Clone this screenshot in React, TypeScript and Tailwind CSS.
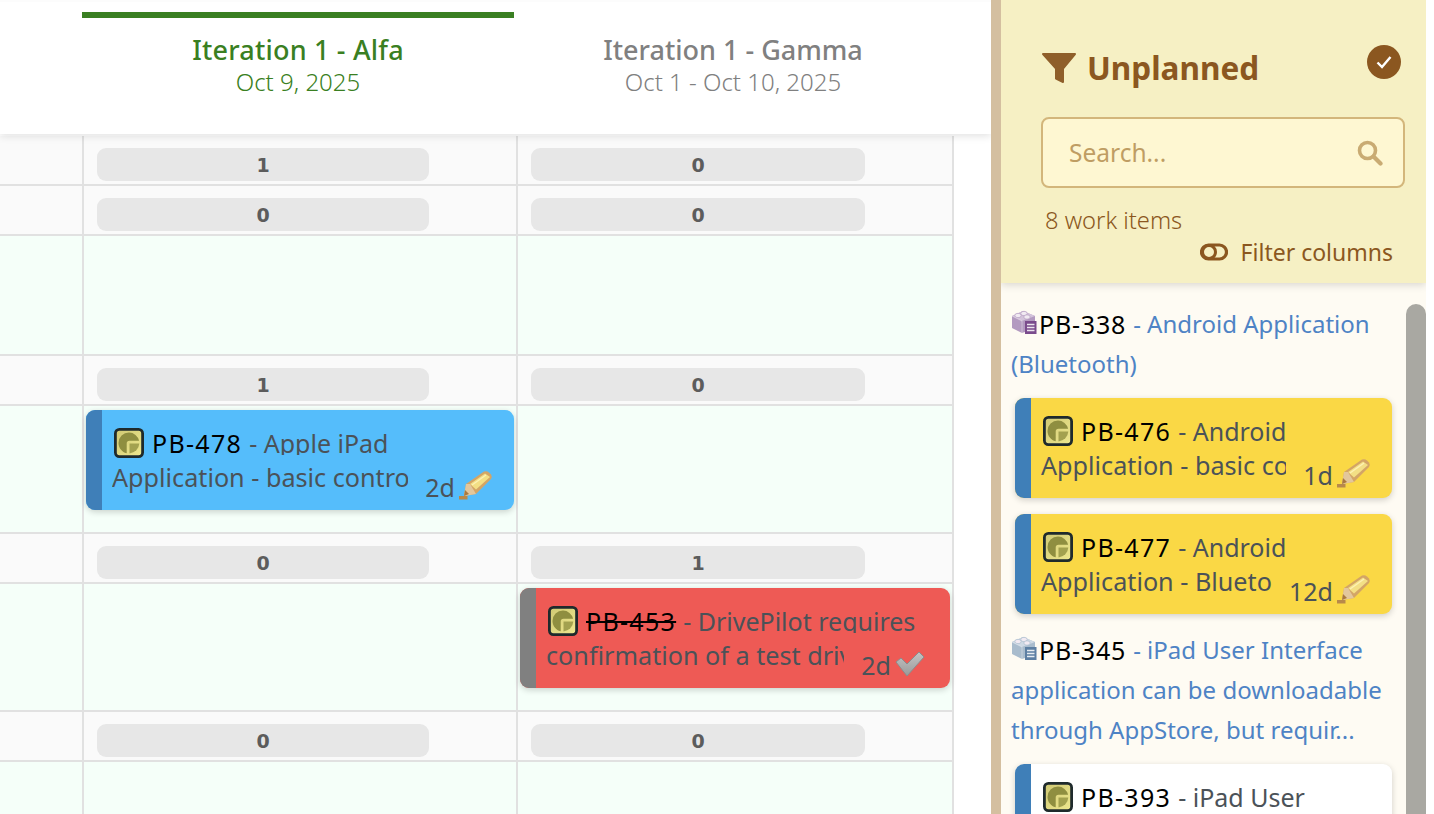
import React from "react";

const font = "[font-family:'Noto_Sans',sans-serif]";

function StoryIcon() {
  return (
    <svg width="30" height="30" viewBox="0 0 30 30" className="shrink-0 mt-[2px]">
      <defs>
        <linearGradient id="sg" x1="0" y1="0" x2="1" y2="1">
          <stop offset="0" stopColor="#cfc873" />
          <stop offset="1" stopColor="#efe88f" />
        </linearGradient>
      </defs>
      <rect x="1.400" y="1.400" width="27.200" height="27.200" rx="4" fill="url(#sg)" stroke="#1f2a2c" strokeWidth="2.800" />
      <path d="M15 4.500a10.500 10.500 0 0 0-10.500 10.500c0 5 3.500 9.200 8.200 10.300V15.600a2.800 2.800 0 0 1 2.800-2.800h9.600A10.500 10.500 0 0 0 15 4.500z" fill="#8f8e40" />
      <path d="M15.500 15.500h9.800A10.500 10.500 0 0 1 15.500 25.400z" fill="#a3a14f" />
    </svg>
  );
}

function Pencil() {
  return (
    <svg width="34" height="30" viewBox="0 0 34 30" className="shrink-0">
      <rect x="0" y="26" width="8.500" height="3.500" fill="#b8894a" />
      <path d="M5 26L7 14 25 1.500Q28 .5 30 2.500L32 4.500Q33.500 7 32 9L17 24z" fill="#d3a566" />
      <path d="M11 14L26 3.500 31 7 17 19.500z" fill="#f3df85" />
      <path d="M13 15L27 5" stroke="#fdf2b4" strokeWidth="1.500" />
      <path d="M5 26L7 14 11 14 17 24z" fill="#e3c79c" />
      <path d="M5 26L6 20 10 24z" fill="#a9793f" />
    </svg>
  );
}

function Check() {
  return (
    <svg width="30" height="26" viewBox="0 0 30 26" className="shrink-0 mr-[4px] mb-[1px]">
      <defs>
        <linearGradient id="cg" x1="0" y1="0" x2="0" y2="1">
          <stop offset="0" stopColor="#c4c4c4" />
          <stop offset="1" stopColor="#9a9a9a" />
        </linearGradient>
      </defs>
      <path d="M1 11L6 7 12 13 24 1 29 6 12 25z" fill="url(#cg)" stroke="#8c8c8c" strokeWidth="1" strokeLinejoin="round" />
    </svg>
  );
}

function Epic({ dark, light, mid }: { dark: string; light: string; mid: string }) {
  return (
    <svg width="26" height="26" viewBox="0 0 26 26" className="shrink-0">
      <path d="M1 7L12 2 24 7V14H14V23L11 24 1 19z" fill={mid} />
      <path d="M1 7L11 12 24 7 12 2z" fill={light} />
      <ellipse cx="7" cy="6.500" rx="3.200" ry="2.200" fill="#f1eaf2" stroke={mid} strokeWidth="0.700" />
      <ellipse cx="13" cy="4.500" rx="3.200" ry="2.200" fill="#f1eaf2" stroke={mid} strokeWidth="0.700" />
      <ellipse cx="16" cy="8" rx="3.200" ry="2.200" fill="#f1eaf2" stroke={mid} strokeWidth="0.700" />
      <path d="M1 7L11 12V24" fill="none" stroke="#fff" strokeWidth="0.600" opacity="0.6" />
      <rect x="14" y="12" width="11.500" height="13" fill={dark} />
      <path d="M16 15.500h7.500M16 18.500h7.500M16 21.500h7.500" stroke="#fff" strokeWidth="1.300" opacity="0.85" />
    </svg>
  );
}

type CardProps = {
  id: string;
  first: string;
  second: string;
  est: string;
  bg: string;
  bar: string;
  done?: boolean;
  outer: string;
};

function Card({ id, first, second, est, bg, bar, done, outer }: CardProps) {
  return (
    <div className={`flex h-[100px] rounded-[9px] overflow-hidden shadow-[0_2px_6px_rgba(0,0,0,0.18)] ${bg} ${outer}`}>
      <div className={`w-[16px] shrink-0 ${bar}`} />
      <div className="flex-1 min-w-0 pl-[10px] pt-[16px] text-[25px] leading-[34px] text-[#4b5258]">
        <div className="flex items-start h-[34px] whitespace-nowrap overflow-hidden pl-[2px]">
          <StoryIcon />
          <span className={`ml-[8px] text-black tracking-[1.300px] ${done ? "line-through" : ""}`}>{id}</span>
          <span className="ml-[7px] h-[29px] overflow-hidden">- {first}</span>
        </div>
        <div className="flex">
          <div className="flex-1 min-w-0 overflow-hidden whitespace-nowrap text-[25.200px]">{second}</div>
          <div className="shrink-0 flex items-end gap-[4px] pl-[17px] pr-[21px] h-[40px]">
            <span className="leading-[34px] mb-[-4px]">{est}</span>
            {done ? <Check /> : <Pencil />}
          </div>
        </div>
      </div>
    </div>
  );
}

function Row({ kind, h, a, b }: { kind: "count" | "body"; h: string; a?: React.ReactNode; b?: React.ReactNode }) {
  const bg = kind === "count" ? "bg-[#fafafa]" : "bg-[#f5fff9]";
  const cell = `border-r-2 border-b-2 border-[#e1e1e1] ${bg} ${h}`;
  return (
    <div className="grid grid-cols-[84px_434px_436px] w-[954px]">
      <div className={cell} />
      <div className={cell}>{a}</div>
      <div className={cell}>{b}</div>
    </div>
  );
}

function Pill({ n, w }: { n: number; w: string }) {
  return (
    <div className={`mt-[12px] ml-[13px] h-[33px] pt-[1px] ${w} rounded-[9px] bg-[#e7e7e7] flex items-center justify-center text-[19px] font-bold text-[#5c5c5c] [font-family:'DejaVu_Sans',sans-serif]`}>
      {n}
    </div>
  );
}

function CountRow({ a, b }: { a: number; b: number }) {
  return <Row kind="count" h="h-[50px]" a={<Pill n={a} w="w-[332px]" />} b={<Pill n={b} w="w-[334px]" />} />;
}

function Epicline({ icon, id, lines }: { icon: React.ReactNode; id: string; lines: string[] }) {
  return (
    <div className="ml-[10px] text-[24px] leading-[40px] text-[#4e83c5]">
      <div className="flex items-center h-[40px] whitespace-nowrap">
        <span className="mb-[4px]">{icon}</span>
        <span className="text-black ml-[2px] text-[25px] tracking-[0.800px]">{id}</span>
        <span className="ml-[7px]">- {lines[0]}</span>
      </div>
      {lines.slice(1).map((l) => (
        <div key={l} className="whitespace-nowrap">{l}</div>
      ))}
    </div>
  );
}

export default function App() {
  return (
    <div className={`relative flex w-[1434px] h-[814px] overflow-hidden bg-white ${font}`}>
      <div className="w-[991px] shrink-0 h-full flex flex-col bg-white overflow-hidden">
        <div className="relative z-10 h-[134px] shrink-0 bg-white border-t-2 border-[#fcfcfc] shadow-[0_2px_8px_rgba(0,0,0,0.12)] pt-[10px] pl-[82px] flex">
          <div className="w-[432px] h-[122px] border-t-[6px] border-[#3a7f22] text-center text-[#3a7f22]">
            <div className="mt-[14px] text-[27px] leading-[36px] font-medium tracking-[0.200px]">Iteration 1 - Alfa</div>
            <div className="text-[24px] leading-[28px] font-light">Oct 9, 2025</div>
          </div>
          <div className="w-[438px] h-[122px] pt-[6px] text-center text-[#808080]">
            <div className="mt-[14px] text-[27px] leading-[36px] font-medium">Iteration 1 - Gamma</div>
            <div className="text-[24px] leading-[28px] font-light">Oct 1 - Oct 10, 2025</div>
          </div>
        </div>
        <div className="pt-[2px]">
          <CountRow a={1} b={0} />
          <CountRow a={0} b={0} />
          <Row kind="body" h="h-[120px]" />
          <CountRow a={1} b={0} />
          <Row
            kind="body"
            h="h-[128px]"
            a={
              <Card
                id="PB-478"
                first="Apple iPad"
                second="Application - basic control"
                est="2d"
                bg="bg-[#55bdfb]"
                bar="bg-[#3f7fb8]"
                outer="mt-[4px] ml-[2px] w-[428px]"
              />
            }
          />
          <CountRow a={0} b={1} />
          <Row
            kind="body"
            h="h-[128px]"
            b={
              <Card
                id="PB-453"
                first="DrivePilot requires"
                second="confirmation of a test drive"
                est="2d"
                bg="bg-[#ee5a55]"
                bar="bg-[#808080]"
                done
                outer="mt-[4px] ml-[2px] w-[430px]"
              />
            }
          />
          <CountRow a={0} b={0} />
          <Row kind="body" h="h-[60px]" />
        </div>
      </div>

      <div className="flex-1 h-full flex flex-col border-l-[10px] border-[#d4bfa0] bg-[#fefbf3] mr-[8px] relative overflow-hidden">
        <div className="relative z-10 h-[283px] shrink-0 bg-[#f6f0c4] shadow-[0_2px_8px_rgba(0,0,0,0.15)] text-[#8b5720] pl-[40px] pr-[21px]">
          <div className="flex items-start pt-[45px] h-[117px]">
            <svg width="36" height="36" viewBox="0 0 36 36" className="mt-[3px] shrink-0">
              <path d="M2 6h32l-12 14.500V34l-7-3.500V20.500z" fill="#8f5f2a" stroke="#8f5f2a" strokeWidth="2" strokeLinejoin="round" />
            </svg>
            <div className="ml-[10px] text-[31.500px] leading-[46px] font-bold">Unplanned</div>
            <div className="ml-auto mr-[4px] w-[34px] h-[34px] rounded-full bg-[#8b5720] flex items-center justify-center">
              <svg width="18" height="14" viewBox="0 0 18 14">
                <path d="M2.500 7.500l4.500 4.500 8.500-10" fill="none" stroke="#fff" strokeWidth="2.400" />
              </svg>
            </div>
          </div>
          <div className="h-[71px] rounded-[8px] border-2 border-[#d3b67b] bg-[#fef7d2] flex items-center pl-[26px] pr-[20px] text-[24.500px] text-[#bf9d63]">
            <span className="pt-[2px]">Search...</span>
            <svg width="26" height="26" viewBox="0 0 26 26" className="ml-auto">
              <circle cx="10.500" cy="10.500" r="8" fill="none" stroke="#c9ab73" strokeWidth="3.600" />
              <path d="M16.500 16.500l7 7" stroke="#c9ab73" strokeWidth="4.200" strokeLinecap="round" />
            </svg>
          </div>
          <div className="mt-[17px] ml-[4px] text-[23.700px] leading-[30px] font-light">8 work items</div>
          <div className="flex items-center justify-end mr-[12px] mt-[1px] text-[23px] leading-[32px]">
            <svg width="28" height="18" viewBox="0 0 28 18" className="mr-[13px]">
              <rect x="1.500" y="2" width="25" height="14" rx="7" fill="none" stroke="#8b5720" strokeWidth="3.200" />
              <circle cx="9" cy="9" r="6.500" fill="none" stroke="#8b5720" strokeWidth="3" />
            </svg>
            <span>Filter columns</span>
          </div>
        </div>

        <div className="pt-[21px] overflow-hidden flex-1">
          <Epicline icon={<Epic dark="#7a4b8c" light="#d3c3da" mid="#b39ac0" />} id="PB-338" lines={["Android Application", "(Bluetooth)"]} />
          <Card
            id="PB-476"
            first="Android"
            second="Application - basic control"
            est="1d"
            bg="bg-[#fad845]"
            bar="bg-[#3f7fb8]"
            outer="mt-[14px] ml-[14px] w-[377px]"
          />
          <Card
            id="PB-477"
            first="Android"
            second="Application - Bluetooth"
            est="12d"
            bg="bg-[#fad845]"
            bar="bg-[#3f7fb8]"
            outer="mt-[16px] ml-[14px] w-[377px]"
          />
          <div className="mt-[16px]">
            <Epicline
              icon={<Epic dark="#5d7fa3" light="#cfdae5" mid="#a9bccd" />}
              id="PB-345"
              lines={["iPad User Interface", "application can be downloadable", "through AppStore, but requir..."]}
            />
          </div>
          <Card
            id="PB-393"
            first="iPad User"
            second="Interface"
            est="1d"
            bg="bg-white"
            bar="bg-[#3f7fb8]"
            outer="mt-[14px] ml-[14px] w-[377px]"
          />
        </div>
        <div className="absolute right-0 top-[304px] bottom-0 w-[20px] rounded-t-[10px] bg-[#a9a8a2]" />
      </div>
    </div>
  );
}
